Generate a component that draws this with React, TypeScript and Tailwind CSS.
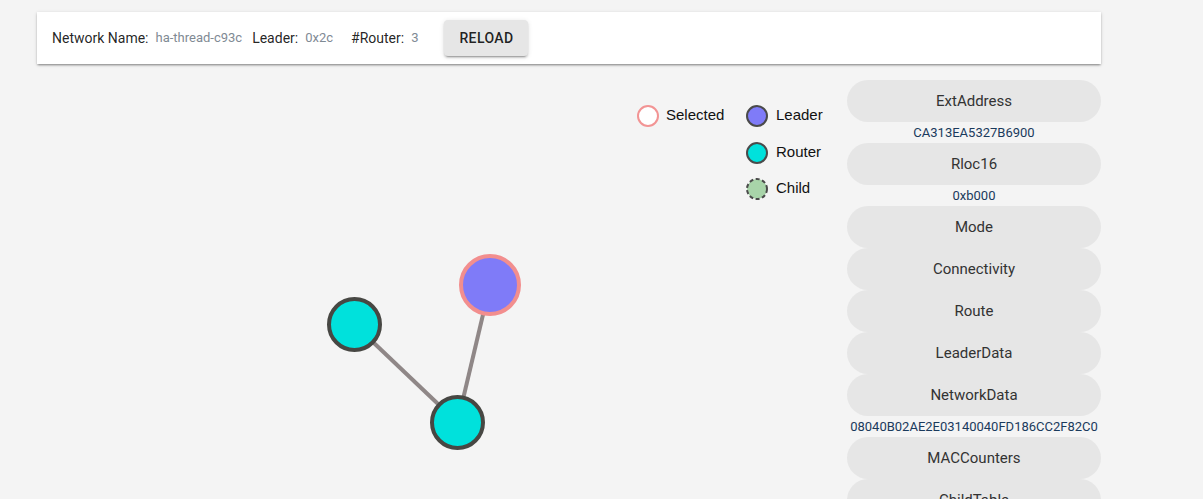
import React from "react";

const buttons: { label: string; value?: string }[] = [
  { label: "ExtAddress", value: "CA313EA5327B6900" },
  { label: "Rloc16", value: "0xb000" },
  { label: "Mode" },
  { label: "Connectivity" },
  { label: "Route" },
  { label: "LeaderData" },
  { label: "NetworkData", value: "08040B02AE2E03140040FD186CC2F82C0" },
  { label: "MACCounters" },
  { label: "ChildTable" },
];

function Graph() {
  return (
    <svg width="810" height="440" className="block shrink-0" style={{ fontFamily: '"Liberation Sans", Arial, sans-serif' }}>
      {/* legend */}
      <circle cx="611" cy="36" r="10" fill="#ffffff" stroke="#f29494" strokeWidth="2" />
      <text x="629" y="34.5" dominantBaseline="central" fontSize="15" fill="#111">Selected</text>
      <circle cx="720" cy="36" r="10" fill="#7f7bf8" stroke="#4a4a4a" strokeWidth="2" />
      <text x="739" y="34.5" dominantBaseline="central" fontSize="15" fill="#111">Leader</text>
      <circle cx="720" cy="73" r="10" fill="#00e1dc" stroke="#4a4a4a" strokeWidth="2" />
      <text x="739" y="71.5" dominantBaseline="central" fontSize="15" fill="#111">Router</text>
      <circle cx="720" cy="109" r="10" fill="#a8d4a9" stroke="#4a4a4a" strokeWidth="2" strokeDasharray="4 2.5" />
      <text x="739" y="107.5" dominantBaseline="central" fontSize="15" fill="#111">Child</text>

      {/* edges */}
      <line x1="453" y1="205" x2="420.5" y2="342.5" stroke="#8f8787" strokeWidth="4" />
      <line x1="317.5" y1="244.5" x2="420.5" y2="342.5" stroke="#8f8787" strokeWidth="4" />

      {/* nodes */}
      <circle cx="453" cy="205" r="29" fill="#7f7bf8" stroke="#f28e8e" strokeWidth="4" />
      <circle cx="317.5" cy="244.5" r="25.5" fill="#00e1dc" stroke="#474743" strokeWidth="4" />
      <circle cx="420.5" cy="342.5" r="25.5" fill="#00e1dc" stroke="#474743" strokeWidth="4" />
    </svg>
  );
}

export default function App() {
  return (
    <div
      className="h-[499px] w-full overflow-hidden bg-[#f4f4f4]"
      style={{ fontFamily: 'Roboto, "Liberation Sans", Arial, sans-serif' }}
    >
      <div className="ml-[37px] w-[1064px] pt-[12px]">
        <div className="flex h-[52px] items-center bg-white pl-[15px] shadow-[0_2px_2px_-1px_rgba(0,0,0,0.3),0_1px_2px_0_rgba(0,0,0,0.14),0_1px_4px_0_rgba(0,0,0,0.12)]">
          <span className="text-[14px] text-[rgba(0,0,0,0.87)]">Network Name:</span>
          <span className="ml-[7px] text-[13px] text-[#7f8a94]">ha-thread-c93c</span>
          <span className="ml-[10px] text-[14px] text-[rgba(0,0,0,0.87)]">Leader:</span>
          <span className="ml-[7px] text-[13px] text-[#7f8a94]">0x2c</span>
          <span className="ml-[18px] text-[14px] text-[rgba(0,0,0,0.87)]">#Router:</span>
          <span className="ml-[7px] text-[13px] text-[#7f8a94]">3</span>
          <button className="ml-[26px] h-[36px] w-[84px] rounded-[4px] bg-[#e6e6e6] text-[14px] font-medium tracking-[0.4px] text-[rgba(0,0,0,0.87)] shadow-[0_3px_1px_-2px_rgba(0,0,0,0.2),0_2px_2px_0_rgba(0,0,0,0.14),0_1px_5px_0_rgba(0,0,0,0.12)]">
            RELOAD
          </button>
        </div>

        <div className="mt-[16px] flex">
          <Graph />
          <div className="flex w-[254px] shrink-0 flex-col">
            {buttons.map((b) => (
              <React.Fragment key={b.label}>
                <div className="flex h-[42px] shrink-0 items-center justify-center rounded-full bg-[#e6e6e6] text-[15px] text-[#333]">
                  {b.label}
                </div>
                {b.value && (
                  <div className="h-[21px] shrink-0 whitespace-nowrap text-center text-[13px] leading-[21px] text-[#1a3a5c]">
                    {b.value}
                  </div>
                )}
              </React.Fragment>
            ))}
          </div>
        </div>
      </div>
    </div>
  );
}
